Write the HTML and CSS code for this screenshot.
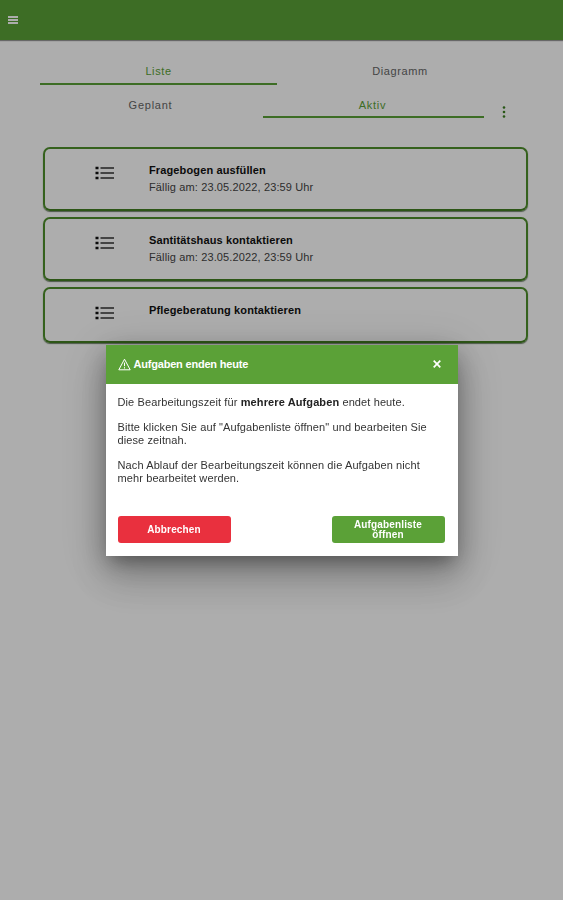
FILE: index.html
```html
<!DOCTYPE html>
<html lang="de">
<head>
    <meta charset="UTF-8">
    <meta name="viewport" content="width=device-width, initial-scale=1.0">
    <title>Aufgaben</title>
    <link rel="stylesheet" href="styles.css">
</head>
<body>

    <header class="toolbar">
        <svg class="menu-icon" viewBox="0 0 10 8">
            <path d="M0 1h10M0 4h10M0 7h10" />
        </svg>
    </header>

    <main class="content">
        <nav class="tabs">
            <div class="tab active">Liste</div>
            <div class="tab">Diagramm</div>
        </nav>
        <nav class="tabs sub-tabs">
            <div class="tab">Geplant</div>
            <div class="tab active">Aktiv</div>
            <svg class="more-icon" viewBox="0 0 4 12">
                <circle cx="2" cy="1.5" r="1.3" />
                <circle cx="2" cy="6" r="1.3" />
                <circle cx="2" cy="10.5" r="1.3" />
            </svg>
        </nav>

        <section class="task-list">
            <article class="task">
                <svg class="list-icon" viewBox="0 0 20 14">
                    <path class="dots" d="M.5 2h3M.5 7h3M.5 12h3" />
                    <path d="M5.5 2h13.5M5.5 7h13.5M5.5 12h13.5" />
                </svg>
                <div>
                    <h3>Fragebogen ausfüllen</h3>
                    <p>Fällig am: 23.05.2022, 23:59 Uhr</p>
                </div>
            </article>
            <article class="task">
                <svg class="list-icon" viewBox="0 0 20 14">
                    <path class="dots" d="M.5 2h3M.5 7h3M.5 12h3" />
                    <path d="M5.5 2h13.5M5.5 7h13.5M5.5 12h13.5" />
                </svg>
                <div>
                    <h3>Santitätshaus kontaktieren</h3>
                    <p>Fällig am: 23.05.2022, 23:59 Uhr</p>
                </div>
            </article>
            <article class="task short">
                <svg class="list-icon" viewBox="0 0 20 14">
                    <path class="dots" d="M.5 2h3M.5 7h3M.5 12h3" />
                    <path d="M5.5 2h13.5M5.5 7h13.5M5.5 12h13.5" />
                </svg>
                <div>
                    <h3>Pflegeberatung kontaktieren</h3>
                </div>
            </article>
        </section>
    </main>

    <div class="overlay">
        <div class="dialog">
            <div class="dialog-header">
                <svg class="warn-icon" viewBox="0 0 13 13">
                    <path d="M6.5 1.2 12.2 11.8H.8Z" />
                    <path d="M6.5 4.6v3.6M6.5 9.2v1.3" />
                </svg>
                <h2>Aufgaben enden heute</h2>
                <svg class="close-icon" viewBox="0 0 8 8">
                    <path d="M.7.7l6.6 6.6M7.3.7L.7 7.3" />
                </svg>
            </div>
            <div class="dialog-body">
                <p>Die Bearbeitungszeit für <b>mehrere Aufgaben</b> endet heute.</p>
                <p>Bitte klicken Sie auf "Aufgabenliste öffnen" und bearbeiten Sie<br>diese zeitnah.</p>
                <p>Nach Ablauf der Bearbeitungszeit können die Aufgaben nicht<br>mehr bearbeitet werden.</p>
            </div>
            <div class="dialog-actions">
                <button class="btn cancel">Abbrechen</button>
                <button class="btn confirm">Aufgabenliste öffnen</button>
            </div>
        </div>
    </div>

</body>
</html>
```
FILE: styles.css
```css
* {
    box-sizing: border-box;
}

body {
    margin: 0;
    height: 900px;
    background: #fff;
    font-family: "Liberation Sans", Arial, sans-serif;
    color: #222;
    overflow: hidden;
}

h2, h3, p {
    margin: 0;
}

/* Kopfzeile */
.toolbar {
    height: 40px;
    padding: 0 8px;
    display: flex;
    align-items: center;
    background: #5ba137;
    box-shadow: 0 1px 1px rgba(0,0,0,0.4);
}
.menu-icon {
    width: 10px;
    height: 8px;
    stroke: #fff;
    stroke-width: 1.8;
}

/* Tabs */
.content {
    padding: 19px 35px 0 40px;
}
.tabs {
    display: grid;
    grid-template-columns: 237px 246px;
    height: 26px;
}
.tab {
    padding-top: 5px;
    font-size: 11px;
    line-height: 14px;
    letter-spacing: 0.6px;
    text-align: center;
    color: #666;
}
.tab.active {
    color: #5ba137;
    border-bottom: 2px solid #5ba137;
}
.sub-tabs {
    grid-template-columns: 223px 221px 40px;
    height: 33px;
}
.sub-tabs .tab {
    padding: 13px 2px 0 0;
    letter-spacing: 0.75px;
}
.more-icon {
    width: 4px;
    height: 12px;
    margin: 21px 0 0 18px;
    fill: #3c8020;
}

/* Aufgabenliste */
.task-list {
    margin: 29px 0 0 3px;
    display: flex;
    flex-direction: column;
    gap: 6px;
}
.task {
    height: 64px;
    padding: 13px 0 0 50px;
    display: flex;
    align-items: flex-start;
    gap: 34px;
    border: 2px solid #4e8f2c;
    border-bottom-color: #437f22;
    border-radius: 7px;
    box-shadow: 0 1px 1px rgba(20,50,10,0.6);
}
.task.short {
    height: 56px;
}
.list-icon {
    width: 20px;
    height: 14px;
    margin-top: 4px;
    fill: none;
    stroke: #333;
    stroke-width: 1.4;
}
.list-icon .dots {
    stroke: #111;
    stroke-width: 2.4;
}
.task h3 {
    font-size: 11px;
    line-height: 16px;
    letter-spacing: 0.13px;
    color: #111;
}
.task p {
    font-size: 11px;
    line-height: 18px;
    letter-spacing: 0.13px;
    color: #444;
}

/* Dialog */
.overlay {
    position: fixed;
    inset: 0;
    display: flex;
    align-items: center;
    justify-content: center;
    background: rgba(0,0,0,0.32);
}
.dialog {
    width: 352px;
    height: 211px;
    display: flex;
    flex-direction: column;
    background: #fff;
    box-shadow: 0 11px 15px -7px rgba(0,0,0,0.2), 0 24px 38px 3px rgba(0,0,0,0.14), 0 9px 46px 8px rgba(0,0,0,0.12), 0 8px 24px rgba(0,0,0,0.25);
}
.dialog-header {
    height: 39px;
    padding: 0 17px 0 12px;
    display: flex;
    align-items: center;
    gap: 3px;
    background: #5ba137;
    color: #fff;
}
.dialog-header h2 {
    flex: 1;
    font-size: 11px;
    letter-spacing: -0.2px;
}
.warn-icon,
.close-icon {
    fill: none;
    stroke: #fff;
}
.warn-icon {
    width: 13px;
    height: 13px;
    stroke-linejoin: round;
}
.close-icon {
    width: 8px;
    height: 8px;
    stroke-width: 1.7;
}
.dialog-body {
    flex: 1;
    padding: 12px 11px 0 12px;
    font-size: 11px;
    line-height: 13px;
    letter-spacing: 0.11px;
    color: #333;
}
.dialog-body p {
    margin-bottom: 12px;
    white-space: nowrap;
}
.dialog-body b {
    color: #222;
}
.dialog-actions {
    display: flex;
    justify-content: space-between;
    padding: 0 13px 13px 12px;
}
.btn {
    width: 113px;
    height: 27px;
    padding: 1px 18px 0;
    border: 0;
    border-radius: 3px;
    font: bold 10px/10px "Liberation Sans", Arial, sans-serif;
    letter-spacing: 0.15px;
    color: #fff;
}
.btn.cancel {
    background: #e9303e;
}
.btn.confirm {
    background: #5ba137;
}
```
